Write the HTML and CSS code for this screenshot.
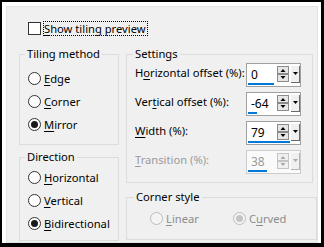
FILE: index.html
```html
<!DOCTYPE html>
<html>
<head>
    <title>Tiling</title>
    <link rel="stylesheet" href="styles.css">
</head>
<body>
    <div class="frame">
        <div class="panel">
            <label class="check-row">
                <span class="checkbox"></span>
                <span class="focus"><u>S</u>how tiling preview</span>
            </label>

            <div class="columns">
                <div class="col-left">
                    <fieldset class="group tiling">
                        <legend>Tiling method</legend>
                        <div class="radio-row"><span class="radio"></span><span><u>E</u>dge</span></div>
                        <div class="radio-row"><span class="radio"></span><span><u>C</u>orner</span></div>
                        <div class="radio-row"><span class="radio checked"></span><span><u>M</u>irror</span></div>
                    </fieldset>

                    <fieldset class="group direction">
                        <legend>Direction</legend>
                        <div class="radio-row"><span class="radio"></span><span><u>H</u>orizontal</span></div>
                        <div class="radio-row"><span class="radio"></span><span><u>V</u>ertical</span></div>
                        <div class="radio-row"><span class="radio checked"></span><span><u>B</u>idirectional</span></div>
                    </fieldset>
                </div>

                <div class="col-right">
                    <fieldset class="group settings">
                        <legend>Settings</legend>

                        <div class="field-row">
                            <span class="field-label">H<u>o</u>rizontal offset (%):</span>
                            <div class="spinbox">
                                <div class="spin-top">
                                    <span class="value">0</span>
                                    <svg class="spin" width="23" height="17" viewBox="0 0 23 17">
                                        <rect class="btn" x="0.5" y="0.5" width="11" height="7"/>
                                        <rect class="btn" x="0.5" y="8.5" width="11" height="7"/>
                                        <path class="arrow" d="M3.5 6h5l-2.5-3z"/>
                                        <path class="arrow" d="M3.5 10h5l-2.5 3z"/>
                                        <rect class="drop" x="14" y="0" width="9" height="17"/>
                                        <path class="drop-shade" d="M22.5 0v17M14 16.5h9"/>
                                        <path class="arrow" d="M16 6h5l-2.5 3z"/>
                                    </svg>
                                </div>
                                <div class="bar" style="width: 26px"></div>
                            </div>
                        </div>

                        <div class="field-row">
                            <span class="field-label">Ver<u>t</u>ical offset (%):</span>
                            <div class="spinbox">
                                <div class="spin-top">
                                    <span class="value">-64</span>
                                    <svg class="spin" width="23" height="17" viewBox="0 0 23 17">
                                        <rect class="btn" x="0.5" y="0.5" width="11" height="7"/>
                                        <rect class="btn" x="0.5" y="8.5" width="11" height="7"/>
                                        <path class="arrow" d="M3.5 6h5l-2.5-3z"/>
                                        <path class="arrow" d="M3.5 10h5l-2.5 3z"/>
                                        <rect class="drop" x="14" y="0" width="9" height="17"/>
                                        <path class="drop-shade" d="M22.5 0v17M14 16.5h9"/>
                                        <path class="arrow" d="M16 6h5l-2.5 3z"/>
                                    </svg>
                                </div>
                                <div class="bar" style="width: 9px"></div>
                            </div>
                        </div>

                        <div class="field-row">
                            <span class="field-label"><u>W</u>idth (%):</span>
                            <div class="spinbox">
                                <div class="spin-top">
                                    <span class="value">79</span>
                                    <svg class="spin" width="23" height="17" viewBox="0 0 23 17">
                                        <rect class="btn" x="0.5" y="0.5" width="11" height="7"/>
                                        <rect class="btn" x="0.5" y="8.5" width="11" height="7"/>
                                        <path class="arrow" d="M3.5 6h5l-2.5-3z"/>
                                        <path class="arrow" d="M3.5 10h5l-2.5 3z"/>
                                        <rect class="drop" x="14" y="0" width="9" height="17"/>
                                        <path class="drop-shade" d="M22.5 0v17M14 16.5h9"/>
                                        <path class="arrow" d="M16 6h5l-2.5 3z"/>
                                    </svg>
                                </div>
                                <div class="bar" style="width: 42px"></div>
                            </div>
                        </div>

                        <div class="field-row disabled">
                            <span class="field-label"><u>T</u>ransition (%):</span>
                            <div class="spinbox">
                                <div class="spin-top">
                                    <span class="value">38</span>
                                    <svg class="spin" width="23" height="17" viewBox="0 0 23 17">
                                        <rect class="btn" x="0.5" y="0.5" width="11" height="7"/>
                                        <rect class="btn" x="0.5" y="8.5" width="11" height="7"/>
                                        <path class="arrow" d="M3.5 6h5l-2.5-3z"/>
                                        <path class="arrow" d="M3.5 10h5l-2.5 3z"/>
                                        <rect class="drop" x="14" y="0" width="9" height="17"/>
                                        <path class="drop-shade" d="M22.5 0v17M14 16.5h9"/>
                                        <path class="arrow" d="M16 6h5l-2.5 3z"/>
                                    </svg>
                                </div>
                                <div class="bar" style="width: 19px"></div>
                            </div>
                        </div>
                    </fieldset>

                    <fieldset class="group corner">
                        <legend>Corner style</legend>
                        <div class="corner-row">
                            <div class="radio-row disabled linear"><span class="radio"></span><span><u>L</u>inear</span></div>
                            <div class="radio-row disabled"><span class="radio checked"></span><span>C<u>u</u>rved</span></div>
                        </div>
                    </fieldset>
                </div>
            </div>
        </div>
    </div>
</body>
</html>
```

FILE: styles.css
```css
* {
    box-sizing: border-box;
}

html,
body {
    margin: 0;
}

body {
    width: 324px;
    height: 247px;
    overflow: hidden;
    background: #000;
    font-family: "Noto Sans", "Liberation Sans", sans-serif;
    font-size: 11.2px;
    color: #000;
}

u {
    text-decoration-thickness: 1px;
    text-underline-offset: 2px;
}

.frame {
    width: 324px;
    height: 247px;
    border-style: solid;
    border-color: #000;
    border-width: 2px 3px 4px 2px;
    background: #fff;
    padding: 4px 3px 0 4px;
}

.panel {
    height: 237px;
    border: 1px solid #e3e3e3;
    background: #f0f0f0;
}

/* checkbox line */
.check-row {
    display: flex;
    align-items: center;
    height: 15px;
    margin: 14px 0 0 21px;
}

.checkbox {
    width: 13px;
    height: 13px;
    border: 1px solid #333;
    background: #fff;
    margin-right: 2px;
}

.focus {
    border: 1px dotted #000;
    line-height: 13px;
    padding-right: 1px;
    white-space: nowrap;
}

/* group boxes */
.columns {
    display: flex;
    gap: 7px;
    margin: 10px 0 0 12px;
}

.group {
    margin: 0;
    min-width: 0;
    border: 1px solid #dcdcdc;
}

.group legend {
    line-height: 16px;
    padding: 0 2px;
}

.tiling {
    width: 100px;
    padding: 5px 0 8px 8px;
}

.tiling legend {
    margin-left: -3px;
}

.direction {
    width: 100px;
    margin-top: 4px;
    padding: 1px 0 5px 8px;
}

.direction legend {
    margin-left: -3px;
}

.radio-row {
    display: flex;
    align-items: center;
    height: 23px;
    white-space: nowrap;
}

.radio {
    position: relative;
    width: 13px;
    height: 13px;
    border: 1px solid #333;
    border-radius: 50%;
    background: #fff;
    margin-right: 3px;
    flex: none;
}

.radio.checked::after {
    content: "";
    position: absolute;
    left: 2px;
    top: 2px;
    width: 7px;
    height: 7px;
    border-radius: 50%;
    background: #1a1a1a;
}

/* settings */
.settings {
    width: 187px;
    padding: 1px 11px 8px 8px;
}

.settings legend {
    margin-left: -2px;
}

.field-row {
    display: flex;
    justify-content: space-between;
    height: 24px;
    margin-bottom: 5px;
}

.field-row:last-child {
    margin-bottom: 0;
}

.field-label {
    line-height: 16px;
    padding-top: 2px;
    white-space: nowrap;
}

.spinbox {
    width: 55px;
    height: 24px;
    border: 1px solid #a0a0a0;
    background: #fff;
    padding-top: 2px;
    flex: none;
}

.spin-top {
    display: flex;
    height: 17px;
}

.value {
    flex: 1;
    padding-left: 4px;
    line-height: 17px;
    font-size: 12px;
}

.spin {
    display: block;
}

.spin .btn {
    fill: #e6e6e6;
    stroke: #8a8a8a;
}

.spin .arrow {
    fill: #000;
}

.spin .drop {
    fill: #f0f0f0;
}

.spin .drop-shade {
    stroke: #696969;
    fill: none;
}

.bar {
    height: 2px;
    margin: 0 0 0 1px;
    background: #0078d7;
}

.field-row.disabled .field-label,
.field-row.disabled .value {
    color: #9a9a9a;
}

.field-row.disabled .spinbox {
    border-color: #cccccc;
    background: #fafafa;
}

.field-row.disabled .btn {
    fill: #f0f0f0;
    stroke: #c4c4c4;
}

.field-row.disabled .arrow {
    fill: #a8a8a8;
}

.field-row.disabled .drop-shade {
    stroke: #b4b4b4;
}

/* corner style */
.corner {
    width: 191px;
    margin-top: 6px;
    padding: 1px 0 9px 23px;
}

.corner legend {
    margin-left: -16px;
}

.corner-row {
    display: flex;
    height: 24px;
}

.corner-row .radio-row {
    height: 24px;
}

.linear {
    width: 83px;
}

.radio-row.disabled {
    color: #8c8c8c;
}

.radio-row.disabled .radio {
    border-color: #bcbcbc;
    background: #f4f4f4;
}

.radio-row.disabled .radio.checked::after {
    background: #c4c4c4;
}
```
